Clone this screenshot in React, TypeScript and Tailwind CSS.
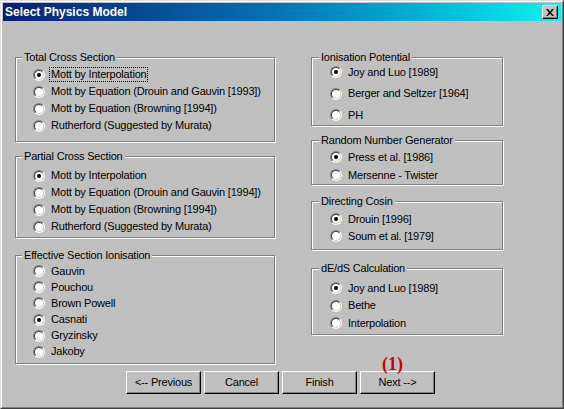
import React from "react";

const Radio = ({ checked }: { checked?: boolean }) => (
  <span className="flex h-[12px] w-[12px] shrink-0 rounded-full border border-t-[#808080] border-l-[#808080] border-r-white border-b-white">
    <span className="flex flex-1 items-center justify-center rounded-full border border-t-[#404040] border-l-[#404040] border-r-[#d4d0c8] border-b-[#d4d0c8] bg-white">
      {checked && <span className="h-[4px] w-[4px] rounded-full bg-black" />}
    </span>
  </span>
);

type GroupProps = {
  title: string;
  items: string[];
  sel: number;
  box: string;
  list: string;
  focus?: boolean;
};

const Group = ({ title, items, sel, box, list, focus }: GroupProps) => (
  <div className={`flex flex-col border border-[#808080] shadow-[inset_1px_1px_0_#fff,1px_1px_0_#fff] ${box}`}>
    <span className="-mt-[7px] -ml-[11px] self-start bg-[#c0c0c0] px-[2px] leading-[13px]">{title}</span>
    <div className={`flex flex-col ${list}`}>
      {items.map((t, i) => (
        <div key={t} className="flex h-[13px] items-center gap-[6px]">
          <Radio checked={i === sel} />
          <span
            className={
              focus && i === sel
                ? "px-[1px] -ml-[1px] leading-[13px] outline-1 outline-dotted outline-black"
                : "leading-[13px]"
            }
          >
            {t}
          </span>
        </div>
      ))}
    </div>
  </div>
);

const Button = ({ label, children }: { label: string; children?: React.ReactNode }) => (
  <div className="relative">
    <button className="h-[23px] w-[75px] border border-t-white border-l-white border-r-black border-b-black bg-[#c0c0c0] text-[11px] shadow-[inset_-1px_-1px_0_#808080]">
      {label}
    </button>
    {children}
  </div>
);

export default function App() {
  return (
    <div className="h-[409px] w-[564px] border border-t-[#dfdfdf] border-l-[#dfdfdf] border-r-[#404040] border-b-[#404040] bg-[#c0c0c0] font-['Liberation_Sans',Arial,sans-serif] text-[11px] tracking-[-0.2px] text-black">
      <div className="flex h-full flex-col border border-t-white border-l-white border-r-[#808080] border-b-[#808080] p-[1px]">
        {/* Title bar */}
        <div className="flex h-[18px] shrink-0 items-center justify-between bg-linear-to-r from-[#0a1f74] via-[#0874b6] to-[#12f2f2] pl-[2px] pr-[3px]">
          <span className="text-[12px] font-bold tracking-normal text-white">Select Physics Model</span>
          <span className="flex h-[14px] w-[16px] items-center justify-center border border-t-white border-l-white border-r-black border-b-black bg-[#c0c0c0] shadow-[inset_-1px_-1px_0_#808080]">
            <svg width="8" height="7" viewBox="0 0 8 7">
              <path d="M0 0h2l2 2.4L6 0h2L5 3.5 8 7H6L4 4.6 2 7H0l3-3.5z" fill="black" />
            </svg>
          </span>
        </div>

        {/* Groups */}
        <div className="mt-[36px] flex gap-[36px] pl-[12px]">
          <div className="flex w-[260px] flex-col">
            <Group
              title="Total Cross Section"
              items={[
                "Mott by Interpolation",
                "Mott by Equation (Drouin and Gauvin [1993])",
                "Mott by Equation (Browning [1994])",
                "Rutherford (Suggested by Murata)",
              ]}
              sel={0}
              focus
              box="h-[85px] pl-[17px]"
              list="mt-[4px] gap-[4px]"
            />
            <Group
              title="Partial Cross Section"
              items={[
                "Mott by Interpolation",
                "Mott by Equation (Drouin and Gauvin [1994])",
                "Mott by Equation (Browning [1994])",
                "Rutherford (Suggested by Murata)",
              ]}
              sel={0}
              box="mt-[14px] h-[82px] pl-[17px]"
              list="mt-[6px] gap-[4px]"
            />
            <Group
              title="Effective Section Ionisation"
              items={["Gauvin", "Pouchou", "Brown Powell", "Casnati", "Gryzinsky", "Jakoby"]}
              sel={3}
              box="mt-[17px] h-[109px] pl-[17px]"
              list="mt-[2.5px] gap-[3.2px]"
            />
          </div>

          <div className="flex w-[192px] flex-col">
            <Group
              title="Ionisation Potential"
              items={["Joy and Luo [1989]", "Berger and Seltzer [1964]", "PH"]}
              sel={0}
              box="h-[69px] pl-[18px]"
              list="mt-[1.5px] gap-[8.5px]"
            />
            <Group
              title="Random Number Generator"
              items={["Press et al. [1986]", "Mersenne - Twister"]}
              sel={0}
              box="mt-[14px] h-[45px] pl-[18px]"
              list="mt-[3.5px] gap-[5px]"
            />
            <Group
              title="Directing Cosin"
              items={["Drouin [1996]", "Soum et al. [1979]"]}
              sel={0}
              box="mt-[16px] h-[49px] pl-[18px]"
              list="mt-[4.5px] gap-[4px]"
            />
            <Group
              title="dE/dS Calculation"
              items={["Joy and Luo [1989]", "Bethe", "Interpolation"]}
              sel={0}
              box="mt-[18px] h-[67px] pl-[18px]"
              list="mt-[6.5px] gap-[4.5px]"
            />
          </div>
        </div>

        {/* Buttons */}
        <div className="mt-[7px] flex gap-[3px] pl-[123px]">
          <Button label="<-- Previous" />
          <Button label="Cancel" />
          <Button label="Finish" />
          <Button label="Next -->">
            <span className="absolute -top-[15px] left-[22px] font-['Liberation_Serif',serif] text-[18px] font-bold leading-[17px] tracking-normal text-[#d00000]">
              (1)
            </span>
          </Button>
        </div>
      </div>
    </div>
  );
}
